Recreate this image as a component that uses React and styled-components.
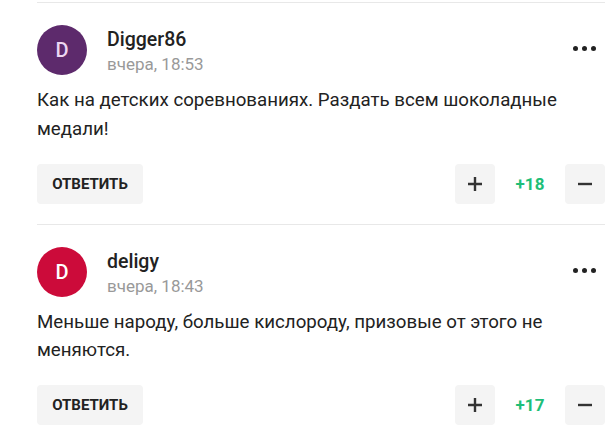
import React from 'react';
import styled, { createGlobalStyle } from 'styled-components';

const Global = createGlobalStyle`
  body {
    margin: 0;
    background: #fff;
    font-family: Roboto, "Liberation Sans", Arial, sans-serif;
    color: #222;
  }
`;

const List = styled.div`
  padding: 2px 7px 0 37px;
`;

const Comment = styled.div`
  border-top: 1px solid #e8e8e8;
  padding: 22px 0 20px;
`;

const Header = styled.div`
  display: flex;
  align-items: flex-start;
`;

const Avatar = styled.div`
  width: 50px;
  height: 50px;
  border-radius: 50%;
  background: ${p => p.color};
  color: ${p => p.letter || '#fff'};
  display: flex;
  align-items: center;
  justify-content: center;
  font-size: 20px;
  font-weight: 500;
  flex-shrink: 0;
`;

const Meta = styled.div`
  display: flex;
  flex-direction: column;
  gap: 1px;
  margin-left: 20px;
  padding-top: 2px;
  flex: 1;
`;

const Name = styled.div`
  font-size: 19.5px;
  line-height: 25px;
  font-weight: 500;
  color: #222;
`;

const Time = styled.div`
  font-size: 17px;
  line-height: 23px;
  color: #999;
`;

const More = styled.button`
  border: 0;
  background: none;
  padding: 0;
  margin-top: 21px;
  margin-right: 9px;
  display: flex;
  gap: 4px;
  cursor: pointer;
`;

const Dot = styled.span`
  width: 5px;
  height: 5px;
  border-radius: 50%;
  background: #222;
`;

const Body = styled.div`
  margin-top: 10px;
  font-size: 18.7px;
  line-height: 28.8px;
  color: #222;
  padding-right: 30px;
`;

const Actions = styled.div`
  margin-top: 20px;
  display: flex;
  align-items: center;
`;

const Reply = styled.button`
  height: 40px;
  width: 106px;
  border: 0;
  border-radius: 4px;
  background: #f4f4f4;
  font-family: Roboto, "Liberation Sans", Arial, sans-serif;
  font-size: 15px;
  font-weight: 700;
  color: #222;
  text-transform: uppercase;
  cursor: pointer;
`;

const Votes = styled.div`
  margin-left: auto;
  display: flex;
  align-items: center;
`;

const VoteBtn = styled.button`
  width: 40px;
  height: 40px;
  border: 0;
  border-radius: 4px;
  background: #f4f4f4;
  display: flex;
  align-items: center;
  justify-content: center;
  padding: 0;
  cursor: pointer;
`;

const Score = styled.span`
  width: 70px;
  text-align: center;
  font-size: 17px;
  font-weight: 700;
  color: #1ebe78;
`;

const Plus = () => (
  <svg width="16" height="16" viewBox="0 0 16 16">
    <path d="M8 1v14M1 8h14" stroke="#333" strokeWidth="2.4" />
  </svg>
);

const Minus = () => (
  <svg width="16" height="16" viewBox="0 0 16 16">
    <path d="M1 8h14" stroke="#333" strokeWidth="2.4" />
  </svg>
);

const comments = [
  {
    name: 'Digger86',
    time: 'вчера, 18:53',
    color: '#5d2a6c',
    letter: '#ecd6f2',
    text: 'Как на детских соревнованиях. Раздать всем шоколадные медали!',
    score: '+18',
  },
  {
    name: 'deligy',
    time: 'вчера, 18:43',
    color: '#cc0b3a',
    letter: '#fff',
    text: 'Меньше народу, больше кислороду, призовые от этого не меняются.',
    score: '+17',
  },
];

const App = () => (
  <>
    <Global />
    <List>
      {comments.map(c => (
        <Comment key={c.name}>
          <Header>
            <Avatar color={c.color} letter={c.letter}>D</Avatar>
            <Meta>
              <Name>{c.name}</Name>
              <Time>{c.time}</Time>
            </Meta>
            <More aria-label="ещё">
              <Dot />
              <Dot />
              <Dot />
            </More>
          </Header>
          <Body>{c.text}</Body>
          <Actions>
            <Reply>Ответить</Reply>
            <Votes>
              <VoteBtn aria-label="плюс"><Plus /></VoteBtn>
              <Score>{c.score}</Score>
              <VoteBtn aria-label="минус"><Minus /></VoteBtn>
            </Votes>
          </Actions>
        </Comment>
      ))}
    </List>
  </>
);

export default App;
